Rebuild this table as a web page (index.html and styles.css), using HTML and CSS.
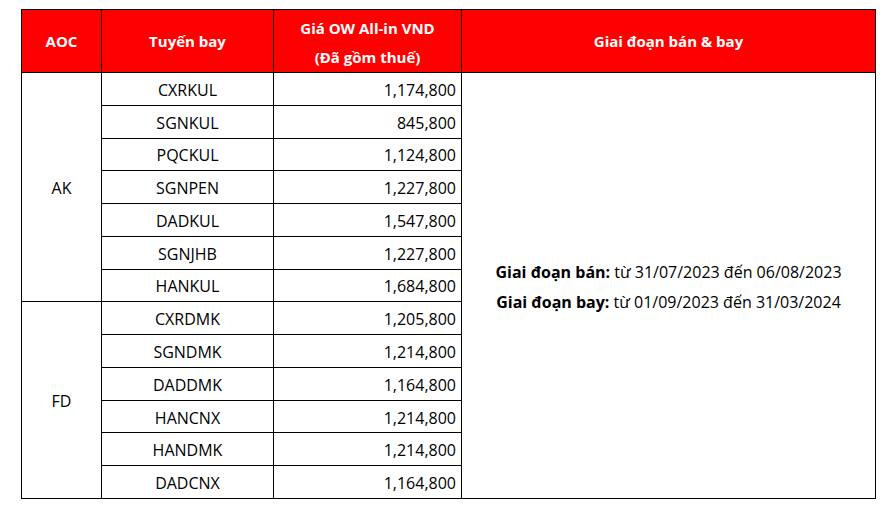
FILE: index.html
```html
<!DOCTYPE html>
<html lang="vi">
<head>
<meta charset="utf-8">
<title>Giá vé</title>
<link rel="stylesheet" href="styles.css">
</head>
<body>
<table class="fares">
  <colgroup>
    <col class="c-aoc"><col class="c-route"><col class="c-price"><col class="c-period">
  </colgroup>
  <thead>
    <tr>
      <th>AOC</th>
      <th>Tuyến bay</th>
      <th class="th-price"><div class="hl">Giá OW All-in VND</div><div class="hl">(Đã gồm thuế)</div></th>
      <th>Giai đoạn bán &amp; bay</th>
    </tr>
  </thead>
  <tbody>
    <tr><td rowspan="7" class="aoc">AK</td><td class="route">CXRKUL</td><td class="price">1,174,800</td>
      <td rowspan="13" class="period">
        <div class="pl"><b>Giai đoạn bán:</b> từ 31/07/2023 đến 06/08/2023</div>
        <div class="pl"><b>Giai đoạn bay:</b> từ 01/09/2023 đến 31/03/2024</div>
      </td></tr>
    <tr><td class="route">SGNKUL</td><td class="price">845,800</td></tr>
    <tr><td class="route">PQCKUL</td><td class="price">1,124,800</td></tr>
    <tr><td class="route">SGNPEN</td><td class="price">1,227,800</td></tr>
    <tr><td class="route">DADKUL</td><td class="price">1,547,800</td></tr>
    <tr><td class="route">SGNJHB</td><td class="price">1,227,800</td></tr>
    <tr><td class="route">HANKUL</td><td class="price">1,684,800</td></tr>
    <tr><td rowspan="6" class="aoc">FD</td><td class="route">CXRDMK</td><td class="price">1,205,800</td></tr>
    <tr><td class="route">SGNDMK</td><td class="price">1,214,800</td></tr>
    <tr><td class="route">DADDMK</td><td class="price">1,164,800</td></tr>
    <tr><td class="route">HANCNX</td><td class="price">1,214,800</td></tr>
    <tr><td class="route">HANDMK</td><td class="price">1,214,800</td></tr>
    <tr><td class="route">DADCNX</td><td class="price">1,164,800</td></tr>
  </tbody>
</table>
</body>
</html>
```
FILE: styles.css
```css
html, body {
  margin: 0;
  padding: 0;
  background: #fff;
}
body {
  padding: 9px 0 0 21px;
  font-family: "Open Sans", "Noto Sans", sans-serif;
  font-size: 16px;
  color: #000;
}
.fares {
  border-collapse: collapse;
  table-layout: fixed;
  width: 854px;
}
.c-aoc { width: 80px; }
.c-route { width: 172px; }
.c-price { width: 188px; }
.c-period { width: 414px; }
.fares th, .fares td {
  border: 1px solid #000;
  padding: 0;
}
.fares th {
  background: #ff0000;
  color: #fff;
  font-weight: 700;
  font-size: 15px;
  height: 62px;
  text-align: center;
  vertical-align: middle;
}
.fares th.th-price {
  padding-top: 4px;
  height: 58px;
}
.hl {
  line-height: 29px;
}
.fares td {
  height: 29.77px;
  padding-top: 2px;
  line-height: 20px;
  text-align: center;
  vertical-align: middle;
}
.fares td.price {
  text-align: right;
  padding-right: 5px;
}
.fares td.period {
  padding-top: 4px;
}
.pl {
  line-height: 30px;
}
.pl b { font-weight: 700; }
```
